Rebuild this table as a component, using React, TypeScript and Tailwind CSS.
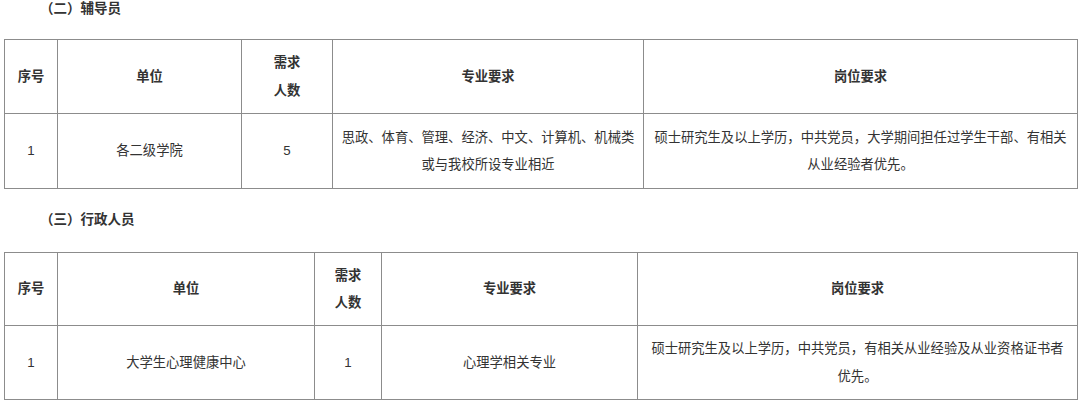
import { ReactNode } from 'react'

const font = { fontFamily: '"Liberation Sans", "Noto Sans CJK SC", sans-serif' }

function Cell({ children, head, h }: { children: ReactNode; head?: boolean; h: string }) {
    return (
        <td className={`border border-[#8c8c8c] px-2 text-center align-middle text-[13.3px] leading-[27.5px] text-[#333] ${head ? 'font-bold' : ''} ${h}`}>
            {children}
        </td>
    )
}

function Lines({ lines }: { lines: string[] }) {
    return (
        <>
            {lines.map((l) => (
                <span key={l} className="block whitespace-nowrap">{l}</span>
            ))}
        </>
    )
}

function Heading({ children, className }: { children: ReactNode; className?: string }) {
    return (
        <div className={`pl-[36px] text-[13.5px] font-bold leading-[18px] text-[#333] ${className ?? ''}`}>{children}</div>
    )
}

export default function App() {
    return (
        <div className="w-[1080px] h-[403px] bg-white px-[4px] overflow-hidden" style={font}>
            <Heading>（二）辅导员</Heading>

            <table className="mt-[21px] w-[1073px] table-fixed border-collapse">
                <colgroup>
                    <col className="w-[53px]" />
                    <col className="w-[184px]" />
                    <col className="w-[91px]" />
                    <col className="w-[311px]" />
                    <col className="w-[434px]" />
                </colgroup>
                <tbody>
                    <tr>
                        <Cell head h="h-[74px]">序号</Cell>
                        <Cell head h="h-[74px]">单位</Cell>
                        <Cell head h="h-[74px]"><Lines lines={['需求', '人数']} /></Cell>
                        <Cell head h="h-[74px]">专业要求</Cell>
                        <Cell head h="h-[74px]">岗位要求</Cell>
                    </tr>
                    <tr>
                        <Cell h="h-[75px]">1</Cell>
                        <Cell h="h-[75px]">各二级学院</Cell>
                        <Cell h="h-[75px]">5</Cell>
                        <Cell h="h-[75px]"><Lines lines={['思政、体育、管理、经济、中文、计算机、机械类', '或与我校所设专业相近']} /></Cell>
                        <Cell h="h-[75px]"><Lines lines={['硕士研究生及以上学历，中共党员，大学期间担任过学生干部、有相关', '从业经验者优先。']} /></Cell>
                    </tr>
                </tbody>
            </table>

            <Heading className="mt-[22px]">（三）行政人员</Heading>

            <table className="mt-[23px] w-[1073px] table-fixed border-collapse">
                <colgroup>
                    <col className="w-[53px]" />
                    <col className="w-[257px]" />
                    <col className="w-[67px]" />
                    <col className="w-[256px]" />
                    <col className="w-[440px]" />
                </colgroup>
                <tbody>
                    <tr>
                        <Cell head h="h-[73px]">序号</Cell>
                        <Cell head h="h-[73px]">单位</Cell>
                        <Cell head h="h-[73px]"><Lines lines={['需求', '人数']} /></Cell>
                        <Cell head h="h-[73px]">专业要求</Cell>
                        <Cell head h="h-[73px]">岗位要求</Cell>
                    </tr>
                    <tr>
                        <Cell h="h-[74px]">1</Cell>
                        <Cell h="h-[74px]">大学生心理健康中心</Cell>
                        <Cell h="h-[74px]">1</Cell>
                        <Cell h="h-[74px]">心理学相关专业</Cell>
                        <Cell h="h-[74px]"><Lines lines={['硕士研究生及以上学历，中共党员，有相关从业经验及从业资格证书者', '优先。']} /></Cell>
                    </tr>
                </tbody>
            </table>
        </div>
    )
}
